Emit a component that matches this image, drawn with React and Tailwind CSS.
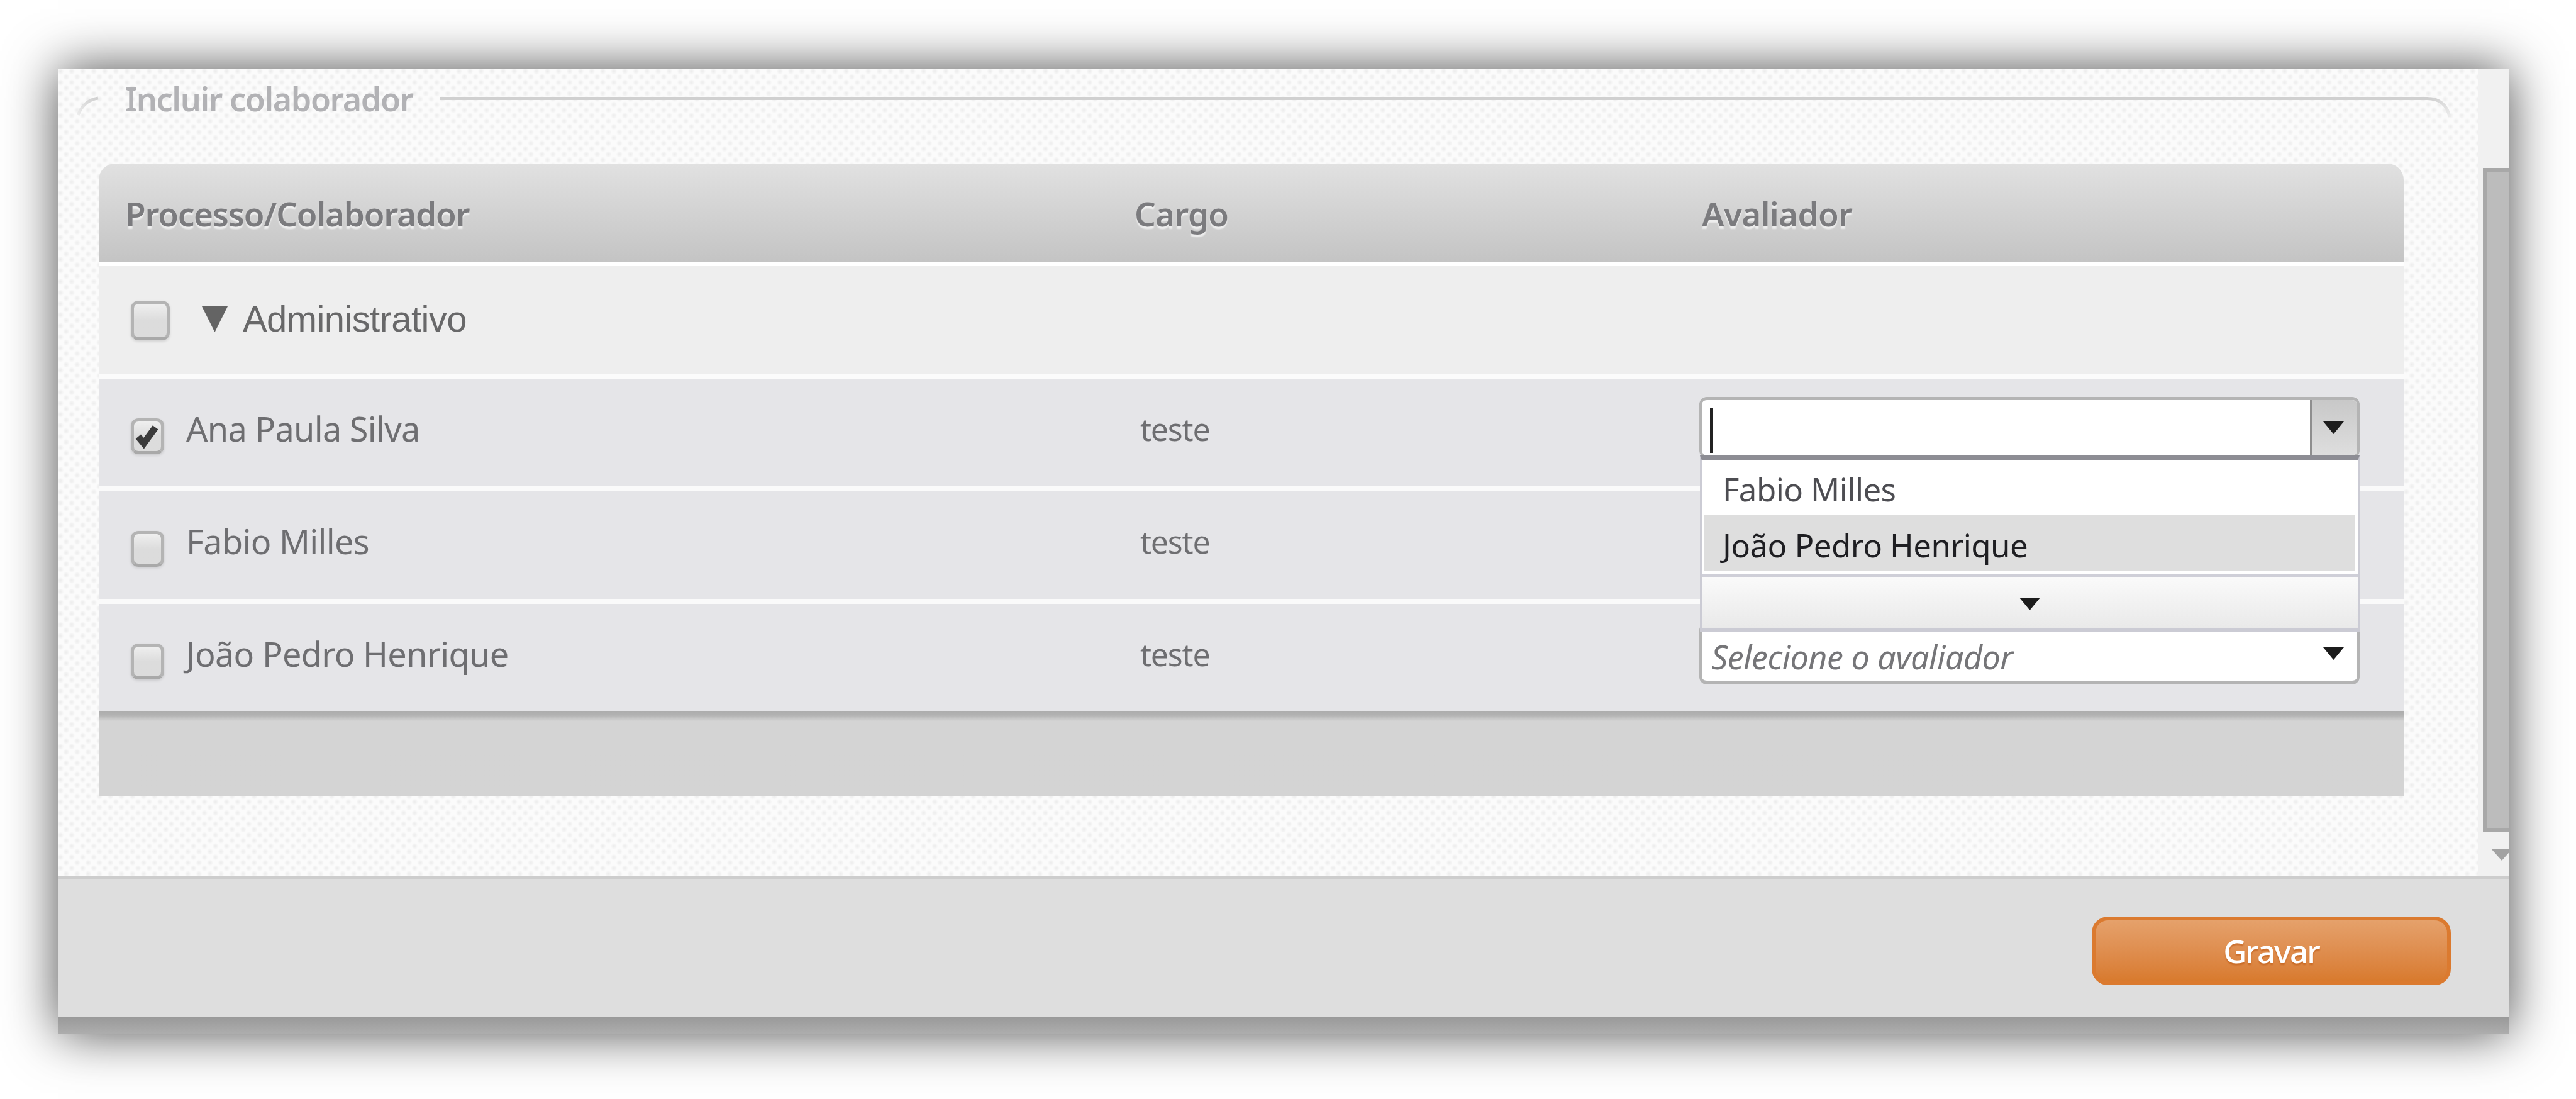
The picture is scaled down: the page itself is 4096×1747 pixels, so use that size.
import React, { useState } from 'react';

const COLABORADORES = [
    { id: 1, nome: 'Ana Paula Silva', cargo: 'teste', marcado: true },
    { id: 2, nome: 'Fabio Milles', cargo: 'teste', marcado: false },
    { id: 3, nome: 'João Pedro Henrique', cargo: 'teste', marcado: false },
];

const App = () => {
    const [rows, setRows] = useState(COLABORADORES);

    const toggle = (id) => {
        setRows(rows.map((r) => (r.id === id ? { ...r, marcado: !r.marcado } : r)));
    };

    return (
        <div className="w-[4096px] h-[1747px] bg-white overflow-hidden pl-[92px] pt-[109px] font-['Noto_Sans',sans-serif]">
            <div className="w-[3898px] h-[1534px] flex flex-col shadow-[0_0_78px_rgba(0,0,0,0.7)]">

                {/* Scrollable content */}
                <div className="h-[1283px] flex bg-[#fbfbfb]">
                    <div className="w-[3848px] bg-[radial-gradient(circle_at_25%_25%,#ececec_0,#f2f2f2_2.5px,transparent_5px),radial-gradient(circle_at_75%_75%,#ececec_0,#f2f2f2_2.5px,transparent_5px)] bg-[length:17.6px_17.6px]">
                        <Legend />
                        <div className="ml-[65px] w-[3665px]">
                            <div className="h-[156px] flex rounded-t-[26px] bg-linear-to-b from-[#e1e1e1] to-[#c4c4c4] text-[53px] leading-[159px] font-semibold text-[#7b7b7e] whitespace-nowrap [text-shadow:0_4px_2px_rgba(255,255,255,0.65)]">
                                <div className="w-[1605px] pl-[42px] tracking-[-1.2px]">Processo/Colaborador</div>
                                <div className="w-[901px] pl-[42px] tracking-[-0.8px]">Cargo</div>
                                <div className="pl-[43px] tracking-[-0.7px]">Avaliador</div>
                            </div>

                            {/* Group row */}
                            <div className="h-[186px] flex bg-[#eeeeee] border-t-[7px] border-b-[8px] border-t-white border-b-[#fbfbfb]">
                                <Checkbox className="mt-[55px] ml-[51px] w-[62px] h-[63px]" />
                                <svg className="mt-[64px] ml-[51px] w-[41px] h-[41px]" viewBox="0 0 41 41">
                                    <path d="M0 0H41L20.5 41Z" fill="#646464" />
                                </svg>
                                <span className="ml-[24px] text-[58px] leading-[167px] tracking-[-0.6px] text-[#686869] font-['Liberation_Sans',sans-serif]">Administrativo</span>
                            </div>

                            {rows.map((r, i) => (
                                <div
                                    key={r.id}
                                    className={`flex bg-[#e5e5e8] text-[#6e6e71] ${i < rows.length - 1 ? 'h-[179px] border-b-[8px] border-[#fafafa]' : 'h-[170px]'}`}
                                >
                                    <div className="w-[1605px] flex">
                                        <Checkbox
                                            className="mt-[63px] ml-[51px] w-[53px] h-[57px]"
                                            checked={r.marcado}
                                            onClick={() => toggle(r.id)}
                                        />
                                        <span className="ml-[35px] text-[54px] leading-[158px] tracking-[-0.7px]">{r.nome}</span>
                                    </div>
                                    <div className="w-[940px] pl-[51px] text-[50px] leading-[161px] tracking-[-1.2px]">{r.cargo}</div>
                                    <div className="relative">
                                        {i === 0 && <OpenCombo />}
                                        {i === 2 && <Combo />}
                                    </div>
                                </div>
                            ))}

                            <div className="h-[135px] bg-[#d4d4d4] bg-linear-to-b from-[#acacac] from-0% via-[#b2b2b2] via-5% to-[#d4d4d4] to-12%" />
                        </div>
                    </div>
                    <Scrollbar />
                </div>

                {/* Footer bar */}
                <div className="h-[224px] flex justify-end bg-[#dedede] border-t-[6px] border-[#cdcdcd] pt-[59px] pr-[93px]">
                    <button className="w-[571px] h-[109px] rounded-[26px] border-[6px] border-[#db7a2f] bg-linear-to-b from-[#e5a16b] to-[#d87a2d] text-center text-white text-[51px] leading-[91px] font-medium tracking-[-2px] [text-shadow:0_3px_2px_rgba(190,90,20,0.6)]">
                        Gravar
                    </button>
                </div>
                <div className="h-[27px] bg-linear-to-b from-[#999999] to-[#adadad]" />
            </div>
        </div>
    );
};

const Legend = () => (
    <div className="h-[151px] flex pl-[28px]">
        <svg className="mt-[42px] w-[38px] h-[38px]" viewBox="0 0 38 38" fill="none">
            <defs>
                <linearGradient id="fadeLeft" x1="1" y1="0" x2="0" y2="1">
                    <stop offset="0.1" stopColor="#d2d2d2" />
                    <stop offset="1" stopColor="#ececec" />
                </linearGradient>
            </defs>
            <path d="M36 5C22 7 10 16 4 32" stroke="url(#fadeLeft)" strokeWidth="5" />
        </svg>
        <span className="ml-[41px] w-[500px] text-[52px] leading-[96px] font-semibold tracking-[-1.4px] text-[#b2b2b5] whitespace-nowrap">Incluir colaborador</span>
        <div className="mt-[45px] w-[3160px] h-[5px] bg-[#d0d0d0]" />
        <svg className="mt-[43px] w-[40px] h-[38px]" viewBox="0 0 40 38" fill="none">
            <defs>
                <linearGradient id="fadeRight" x1="0" y1="0" x2="1" y2="1">
                    <stop offset="0.1" stopColor="#d0d0d0" />
                    <stop offset="1" stopColor="#ececec" />
                </linearGradient>
            </defs>
            <path d="M0 4.5C18 4.500 32 13 36 34" stroke="url(#fadeRight)" strokeWidth="5" />
        </svg>
    </div>
);

const Checkbox = ({ className, checked, onClick }) => (
    <div
        onClick={onClick}
        className={`shrink-0 rounded-[12px] border-[5px] border-[#b4b4b4] border-b-[#a9a9a9] bg-linear-to-b from-[#efefef] to-[#dcdcdc] to-50% shadow-[0_2px_4px_rgba(0,0,0,0.12)] ${className}`}
    >
        {checked && (
            <svg className="w-[43px] h-[47px]" viewBox="0 0 44 47" fill="none">
                <path d="M7 24L16 35L35 9" stroke="#3a3a3a" strokeWidth="11" />
            </svg>
        )}
    </div>
);

const Arrow = ({ className }) => (
    <svg className={`w-[33px] h-[20px] ${className}`} viewBox="0 0 33 20">
        <path d="M0 0H33L16.500 20Z" fill="#1c1c1c" />
    </svg>
);

const Combo = () => (
    <div className="mt-[30px] w-[1050px] h-[98px] flex justify-between rounded-[12px] border-[4px] border-b-[6px] border-[#b4b4b4] bg-white">
        <span className="pl-[15px] text-[52px] leading-[100px] italic tracking-[-0.5px] text-[#757578]">Selecione o avaliador</span>
        <Arrow className="mt-[35px] mr-[21px]" />
    </div>
);

const OpenCombo = () => (
    <>
        <div className="mt-[29px] w-[1050px] h-[97px] flex rounded-[12px] border-[4px] border-t-[5px] border-[#b4b4b4] bg-white overflow-hidden">
            <div className="mt-[13px] ml-[13px] w-[4px] h-[71px] bg-[#222222]" />
            <div className="ml-auto w-[75px] border-l-[3px] border-[#8e8e8e] bg-linear-to-b from-[#c8c8c8] to-[#dedede] pl-[18px] pt-[34px]">
                <Arrow />
            </div>
        </div>

        {/* Option list, opens over the rows below */}
        <div className="absolute z-10 left-[1px] top-[122px] w-[1049px] border-[3px] border-t-[8px] border-b-[5px] border-[#cbcbd4] border-t-[#8d8d94] bg-white text-[51px] tracking-[-0.6px]">
            <div className="h-[87px] pl-[33px] leading-[91px] text-[#4d4d52]">Fabio Milles</div>
            <div className="h-[89px] mx-[4px] pl-[29px] leading-[95px] bg-[#dedede] text-[#1e1e22]">João Pedro Henrique</div>
            <div className="mt-[5px] h-[86px] border-t-[5px] border-[#cfcfd8] bg-linear-to-b from-[#fafafa] to-[#e9e9e9] flex justify-center">
                <Arrow className="mt-[32px]" />
            </div>
        </div>
    </>
);

const Scrollbar = () => (
    <div className="w-[50px] h-[1283px] bg-[#f1f1f1] pt-[158px] pl-[8px] overflow-hidden">
        <div className="h-[1055px] border-[6px] border-r-0 border-[#a8a8a8] bg-[#bcbcbc]" />
        <svg className="mt-[27px] ml-[13px] w-[34px] h-[19px]" viewBox="0 0 34 19">
            <path d="M0 0H34L17 19Z" fill="#a2a2a2" />
        </svg>
    </div>
);

export default App;
